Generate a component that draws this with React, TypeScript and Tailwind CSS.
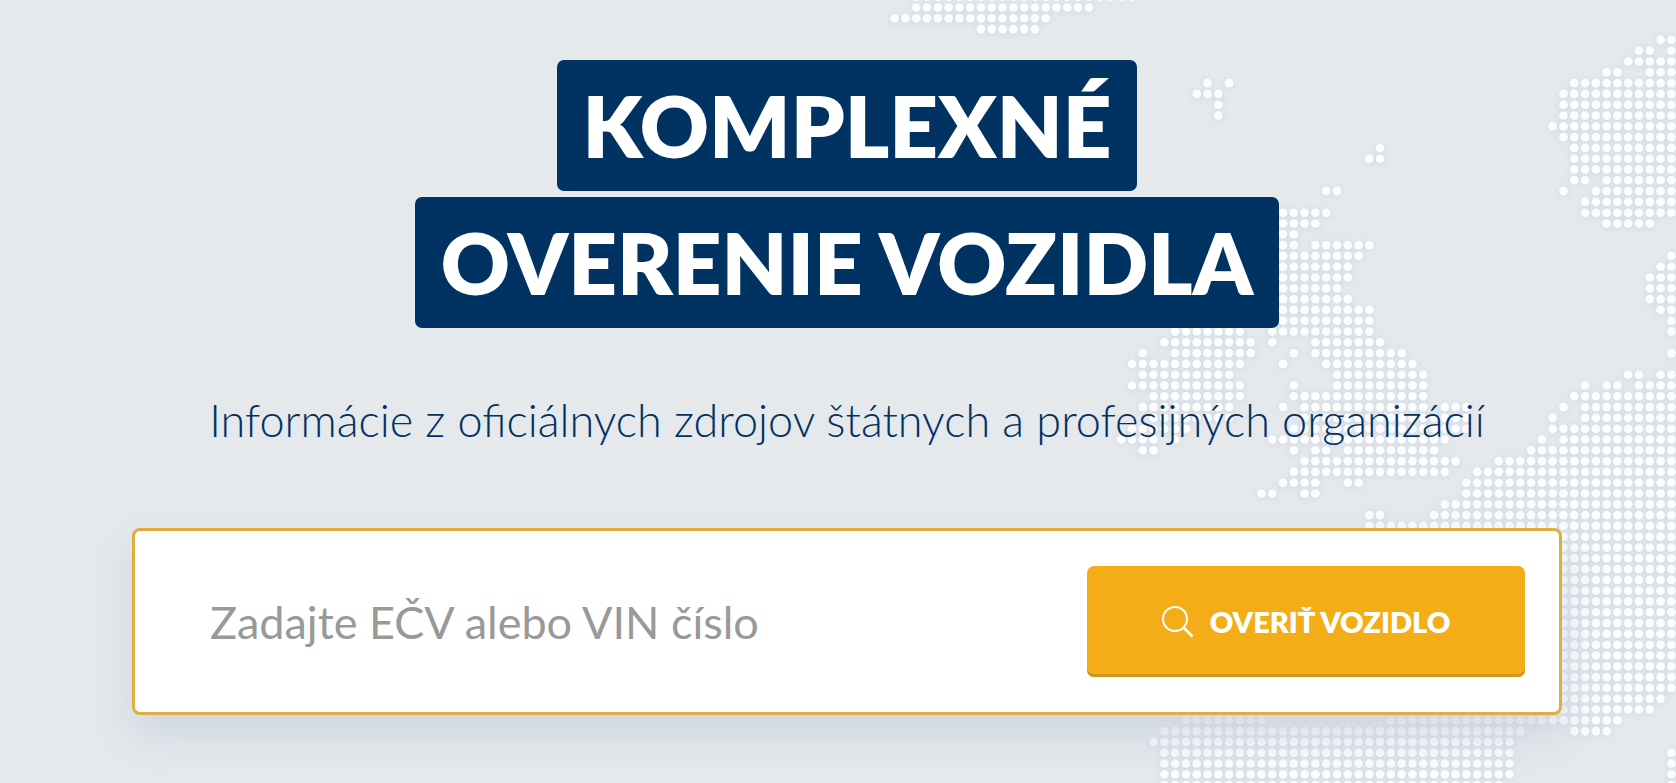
import { useState } from 'react'

// dotted map: for each row, pairs of first and last column that carry a dot
const rows: Record<number, number[]> = {
  [-1]: [2, 22],
  0: [2, 18],
  1: [0, 14],
  2: [8, 13],
  3: [71, 72],
  4: [69, 70, 72, 72],
  5: [68, 72],
  6: [66, 67, 70, 72],
  7: [29, 29, 31, 31, 63, 72],
  8: [28, 30, 62, 72],
  9: [30, 30, 62, 72],
  10: [30, 30, 62, 72],
  11: [61, 72],
  12: [62, 72],
  13: [45, 45, 63, 72],
  14: [44, 45, 63, 72],
  15: [63, 72],
  16: [63, 64, 66, 72],
  17: [40, 41, 62, 62, 65, 72],
  18: [64, 72],
  19: [36, 40, 64, 72],
  20: [36, 39, 66, 70],
  21: [36, 37],
  22: [36, 37, 39, 44],
  23: [36, 43, 72, 72],
  24: [36, 42, 71, 72],
  25: [36, 42, 70, 72],
  26: [36, 41, 70, 72],
  27: [36, 42, 70, 72],
  28: [36, 44, 71, 72],
  29: [36, 44, 72, 72],
  30: [26, 32, 35, 44, 72, 72],
  31: [25, 33, 35, 35, 39, 45],
  32: [23, 23, 26, 33, 37, 37, 39, 47, 72, 72],
  33: [22, 32, 36, 36, 40, 48],
  34: [23, 31, 41, 49, 68, 69, 71, 72],
  35: [22, 32, 37, 37, 41, 49, 64, 64, 66, 67, 69, 72],
  36: [24, 32, 37, 49, 63, 72],
  37: [23, 31, 36, 36, 38, 49, 51, 53, 62, 62, 64, 72],
  38: [24, 31, 38, 53, 61, 61, 64, 72],
  39: [22, 27, 37, 53, 61, 72],
  40: [21, 24, 26, 26, 35, 51, 60, 60, 62, 72],
  41: [23, 24, 37, 37, 39, 40, 42, 50, 59, 72],
  42: [38, 52, 56, 72],
  43: [37, 51, 54, 72],
  44: [36, 39, 42, 43, 53, 72],
  45: [34, 35, 38, 39, 53, 72],
  46: [51, 72],
  47: [44, 45, 50, 72],
  48: [44, 72],
  64: [44, 71],
  65: [44, 70],
  66: [27, 34, 46, 67],
  67: [25, 58, 63, 66],
  68: [24, 57],
  69: [25, 57, 72, 72],
  70: [25, 57, 72, 72],
  71: [25, 57, 72, 72],
  72: [25, 56, 72, 72],
}
for (let r = 49; r < 64; r++) rows[r] = [44, 72]

function DottedMap() {
  const dots: React.ReactNode[] = []
  Object.entries(rows).forEach(([row, spans]) => {
    for (let i = 0; i < spans.length; i += 2) {
      for (let c = spans[i]; c <= spans[i + 1]; c++) {
        dots.push(<circle key={`${row}-${c}`} cx={8.7 + c * 10.787} cy={7.5 + Number(row) * 10.8} r={4.3} />)
      }
    }
  })
  return (
    <svg
      aria-hidden="true"
      width="790"
      height="783"
      viewBox="0 0 790 783"
      fill="#fbfdfe"
      className="col-start-1 row-start-1 justify-self-end drop-shadow-[0_1px_3px_rgba(170,175,200,0.3)]"
    >
      {dots}
    </svg>
  )
}

export default function App() {
  const [query, setQuery] = useState('')

  return (
    <main className="grid min-h-screen overflow-hidden bg-[#e5e9ec] font-['Lato',sans-serif]">
      <DottedMap />
      <section className="z-10 col-start-1 row-start-1 flex min-w-0 flex-col items-center pt-[60px] pr-[114px] pb-16 pl-[132px]">
        <h1 className="flex flex-col items-center gap-[6px] text-[85px] leading-[131px] font-extrabold text-white">
          <span className="rounded-[7px] bg-[#003262] px-[26px]">KOMPLEXNÉ</span>
          <span className="rounded-[7px] bg-[#003262] px-[26px]">OVERENIE VOZIDLA</span>
        </h1>
        <p className="mt-16 text-center text-[45px] leading-[56px] font-light text-[#003262]">
          Informácie z oficiálnych zdrojov štátnych a profesijných organizácií
        </p>
        <form
          onSubmit={e => e.preventDefault()}
          className="mt-20 flex w-full items-center rounded-lg border-3 border-[#e0ad40] bg-white py-[35px] pr-[34px] pl-[75px] shadow-[0_20px_40px_rgba(200,209,224,0.8)]"
        >
          <input
            type="text"
            aria-label="Zadajte EČV alebo VIN číslo"
            placeholder="Zadajte EČV alebo VIN číslo"
            value={query}
            onChange={e => setQuery(e.target.value)}
            className="min-w-0 flex-1 bg-transparent text-[45px] leading-[56px] text-[#333333] outline-none placeholder:text-[#999999]"
          />
          <button
            type="submit"
            className="flex h-[111px] w-[438px] items-center justify-center gap-4 rounded-[7px] bg-[#f4ad16] text-[29px] font-extrabold text-white shadow-[inset_0_-3px_0_#cf9620]"
          >
            <svg aria-hidden="true" width="32" height="32" viewBox="0 0 32 32" fill="none" stroke="currentColor">
              <circle cx="13" cy="13" r="12" strokeWidth="2" />
              <path d="M21.5 21.5 L30.5 30.5" strokeWidth="2.6" />
            </svg>
            OVERIŤ VOZIDLO
          </button>
        </form>
      </section>
    </main>
  )
}
